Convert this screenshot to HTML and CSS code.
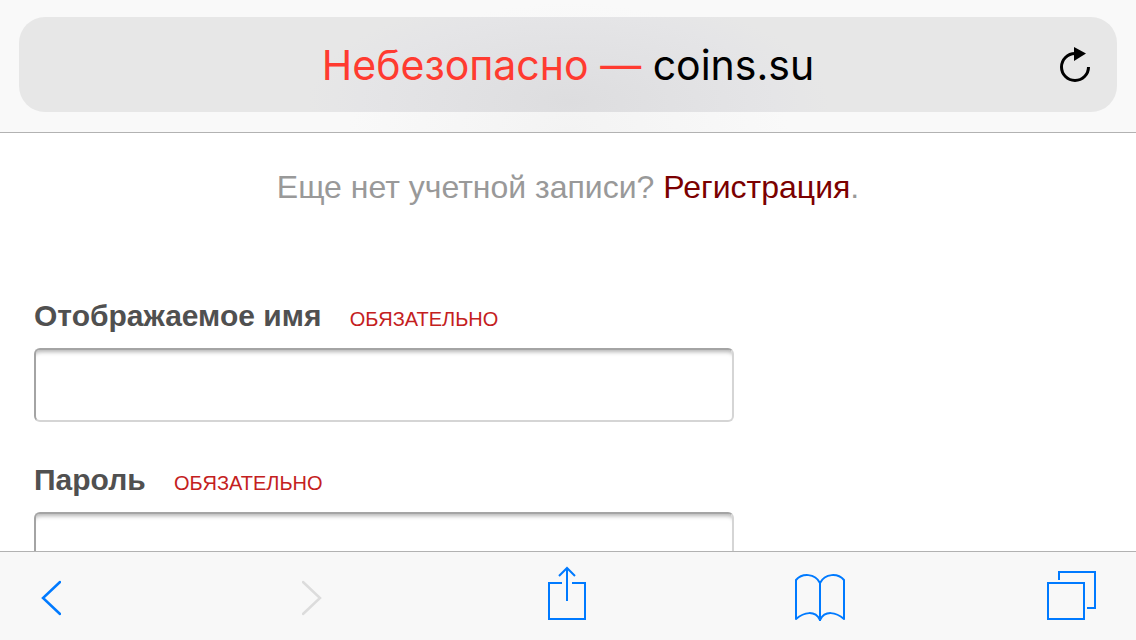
FILE: index.html
```html
<!DOCTYPE html>
<html lang="ru">
<head>
    <meta charset="UTF-8">
    <meta name="viewport" content="width=device-width, initial-scale=1.0">
    <link rel="stylesheet" href="styles.css">
    <title>coins.su</title>
</head>
<body>
    <header class="topbar">
        <div class="address">
            <span class="url"><span class="unsafe">Небезопасно —</span> coins.su</span>
            <button type="button" class="reload" aria-label="Обновить">
                <svg width="32" height="36" viewBox="0 0 32 36">
                    <path d="M16 6.500A13.500 13.500 0 1 0 29.500 20" fill="none" stroke="#000" stroke-width="3"/>
                    <path d="M15 0L27 6.500L15 14Z" fill="#000"/>
                </svg>
            </button>
        </div>
    </header>

    <main class="page">
        <p class="signup">Еще нет учетной записи? <a href="#">Регистрация</a>.</p>
        <form class="login">
            <div class="field">
                <label for="username">Отображаемое имя <span class="required">ОБЯЗАТЕЛЬНО</span></label>
                <input type="text" name="username" required id="username">
            </div>
            <div class="field">
                <label for="password">Пароль <span class="required">ОБЯЗАТЕЛЬНО</span></label>
                <input type="password" name="password" required id="password">
            </div>
        </form>
    </main>

    <nav class="toolbar">
        <button type="button" aria-label="Назад">
            <svg width="20" height="56" viewBox="0 0 20 56">
                <path d="M19 16L2 32L19 48" stroke-width="2.500" stroke-linecap="round"/>
            </svg>
        </button>
        <button type="button" aria-label="Вперед" disabled>
            <svg width="20" height="56" viewBox="0 0 20 56">
                <path d="M1 16L18 32L1 48" stroke-width="2.500" stroke-linecap="round"/>
            </svg>
        </button>
        <button type="button" aria-label="Поделиться">
            <svg width="38" height="56" viewBox="0 0 38 56">
                <path d="M14 17H1V53H37V17H24M19 35V3M11 10L19 2L27 10"/>
            </svg>
        </button>
        <button type="button" aria-label="Закладки">
            <svg width="50" height="56" viewBox="0 0 50 56">
                <path d="M25 55V17C20 7 7 7 1 14V53C9 46 20 44 25 54C30 44 41 46 49 53V14C43 7 30 7 25 17" stroke-linejoin="round"/>
            </svg>
        </button>
        <button type="button" aria-label="Вкладки">
            <svg width="50" height="56" viewBox="0 0 50 56">
                <path d="M1 17H37V53H1ZM12 14V6H48V42H40"/>
            </svg>
        </button>
    </nav>
</body>
</html>
```
FILE: styles.css
```css
* {
    box-sizing: border-box;
}
body {
    display: flex;
    flex-direction: column;
    height: 100vh;
    margin: 0;
    overflow: hidden;
    background: #fff;
    font-family: "Liberation Sans", Arial, sans-serif;
}
button {
    padding: 0;
    border: none;
    background: none;
    cursor: pointer;
}
svg {
    display: block;
}

/* address bar */
.topbar {
    flex: none;
    padding: 17px 19px 20px;
    border-bottom: 1px solid #b2b2b2;
    background: radial-gradient(ellipse 220px 130px at 50% 100%, #f3f3f3, #f9f9f9);
}
.address {
    display: grid;
    grid-template-columns: 32px 1fr 32px;
    align-items: center;
    height: 95px;
    padding: 0 26px;
    border-radius: 26px;
    background: radial-gradient(ellipse 260px 110px at 50% 90%, #dddddf, #e5e5e7 80%, #e7e7e7);
}
.url {
    grid-column: 2;
    text-align: center;
    white-space: nowrap;
    font-family: Inter, "Liberation Sans", sans-serif;
    font-size: 41px;
    line-height: 48px;
    color: #000;
}
.unsafe {
    color: #ff3b30;
}

/* page */
.page {
    flex: 1;
    min-height: 0;
    overflow: hidden;
    padding: 36px 34px 0;
}
.signup {
    margin: 0 0 93px;
    text-align: center;
    font-size: 32px;
    line-height: 36px;
    color: #999;
}
.signup a {
    color: #7b0000;
    text-decoration: none;
}
.field {
    margin-bottom: 40px;
}
label {
    display: block;
    margin-bottom: 11px;
    font-size: 30px;
    line-height: 36px;
    font-weight: bold;
    color: #505050;
}
.required {
    margin-left: 20px;
    font-size: 20px;
    font-weight: normal;
    color: #c42020;
}
input {
    display: block;
    width: 700px;
    max-width: 100%;
    height: 74px;
    padding: 8px 16px;
    border: 2px solid;
    border-color: #a4a4a4 #d5d5d5 #d5d5d5 #a4a4a4;
    border-radius: 6px;
    box-shadow: inset 0 6px 4px -4px rgba(0, 0, 0, 0.3);
    background: #fff;
    font-size: 30px;
}

/* bottom toolbar */
.toolbar {
    flex: none;
    display: grid;
    grid-template-columns: 261fr 246fr 247fr 252fr 50px;
    justify-items: start;
    padding: 14px 39px 18px 41px;
    border-top: 1px solid #b2b2b2;
    background: #f8f8f8;
}
.toolbar svg {
    fill: none;
    stroke: #007aff;
    stroke-width: 2;
}
.toolbar button:disabled svg {
    stroke: #dcdcdc;
}
```
